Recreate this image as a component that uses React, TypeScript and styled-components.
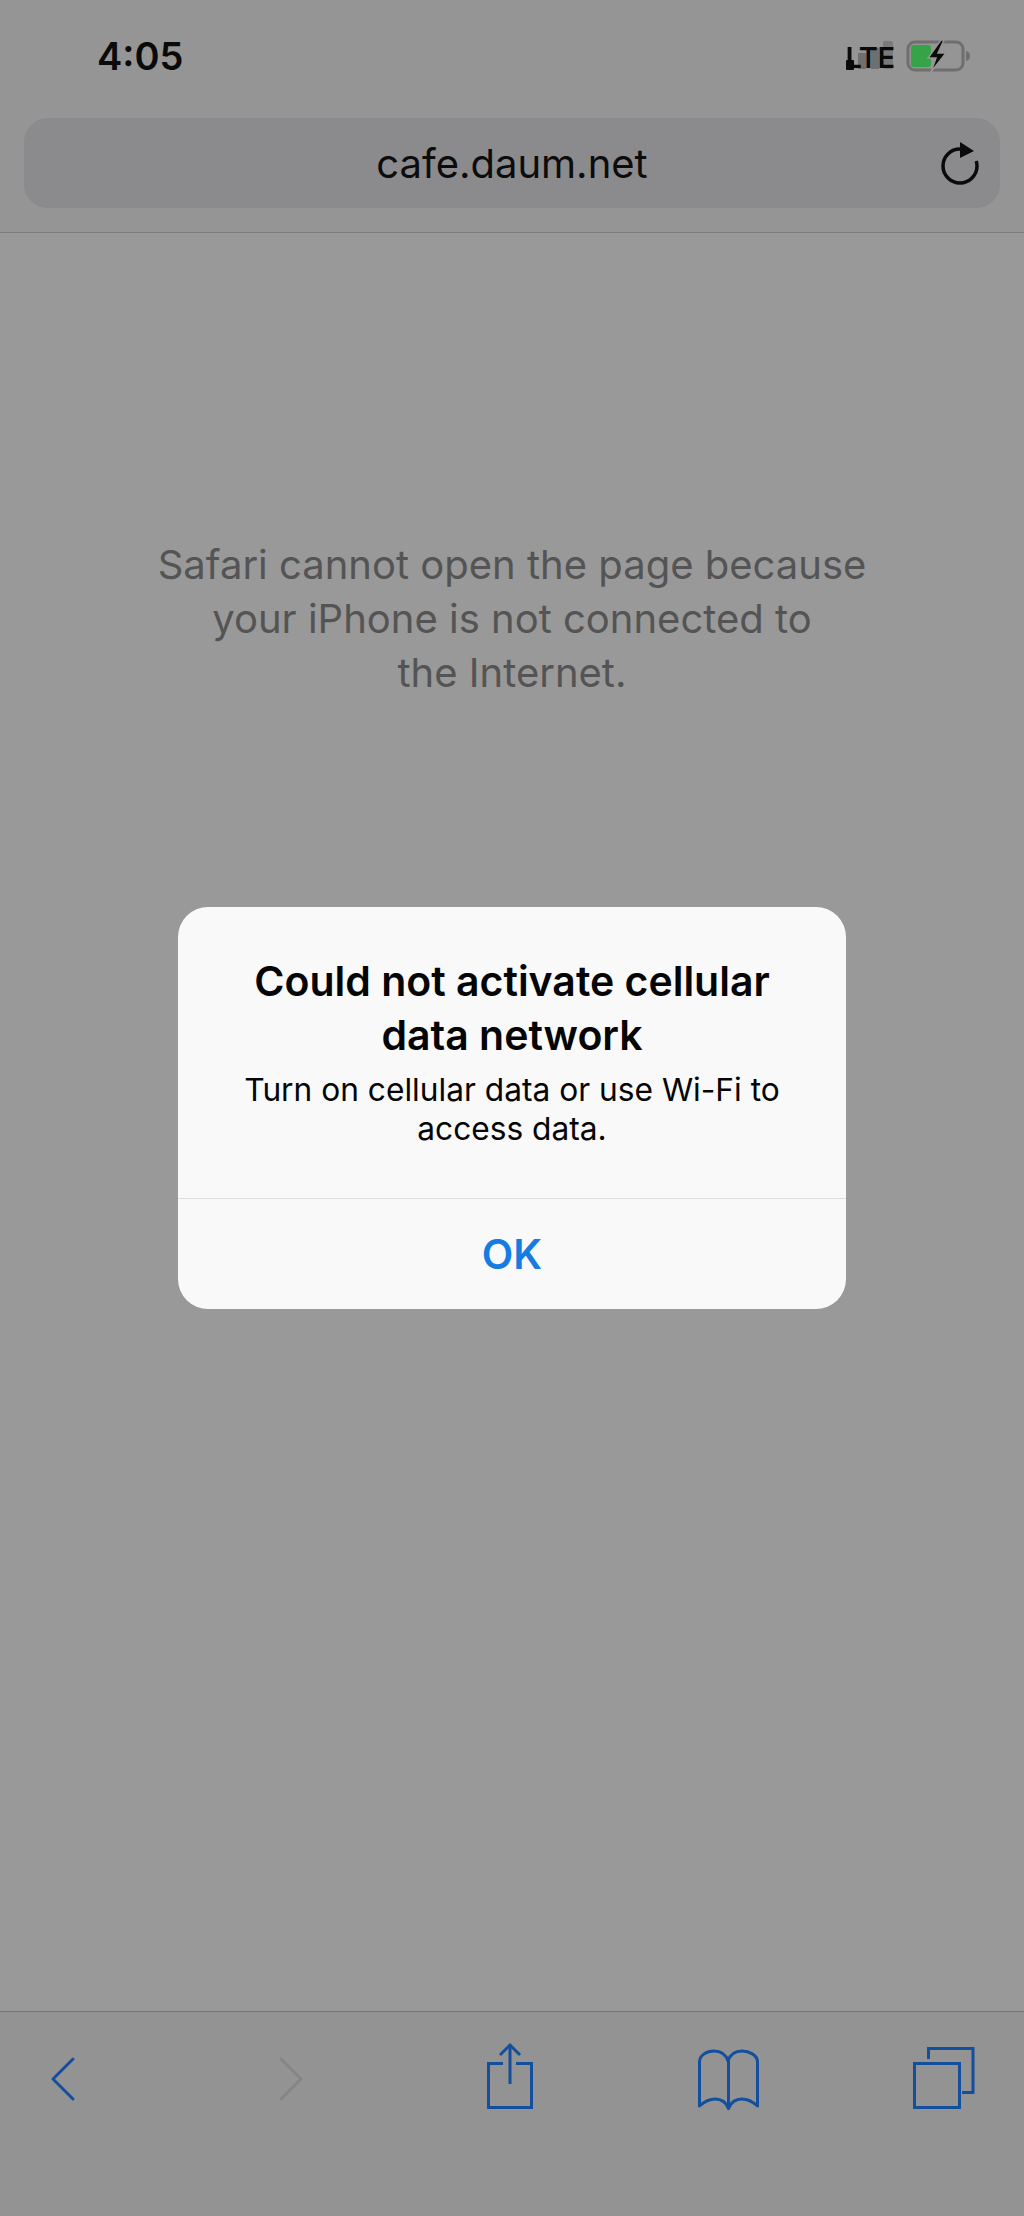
import React from "react";
import styled, { createGlobalStyle } from "styled-components";

const Global = createGlobalStyle`
  html, body { margin: 0; padding: 0; }
  body { font-family: Inter, "Noto Sans", "Liberation Sans", sans-serif; background: #999; }
`;

const Screen = styled.div`
  position: relative;
  width: 1024px;
  height: 2216px;
  display: flex;
  flex-direction: column;
  background: #999999;
  overflow: hidden;
`;

const Header = styled.header`
  height: 232px;
  flex: none;
  background: #959595;
  border-bottom: 1px solid #7c7c7c;
`;

const StatusBar = styled.div`
  height: 112px;
  margin-bottom: 6px;
  padding: 0 54px 0 97px;
  display: flex;
  align-items: center;
  justify-content: space-between;
`;

const Time = styled.span`
  font-size: 38px;
  font-weight: 600;
  color: #0a0a0a;
`;

const StatusRight = styled.div`
  display: flex;
  align-items: center;
  gap: 12px;
`;

const Carrier = styled.div`
  position: relative;
  width: 48px;
  height: 30px;
  display: flex;
  align-items: center;
  justify-content: center;
`;

const SignalBars = styled.svg`
  position: absolute;
  left: 0;
  top: 0;
`;

const CarrierLabel = styled.span`
  position: relative;
  font-size: 29px;
  font-weight: 600;
  letter-spacing: -0.5px;
  color: #0a0a0a;
  line-height: 30px;
  top: 2px;
`;

const AddressBar = styled.div`
  height: 90px;
  margin: 0 24px;
  padding-right: 20px;
  border-radius: 24px;
  background: #8b8b8d;
  display: grid;
  grid-template-columns: 1fr auto 1fr;
  align-items: center;
`;

const Url = styled.span`
  grid-column: 2;
  font-size: 40px;
  font-weight: 400;
  color: #0c0c0c;
  margin-left: 20px;
`;

const ReloadIcon = styled.svg`
  grid-column: 3;
  justify-self: end;
`;

const Content = styled.main`
  flex: 1;
  padding-top: 305px;
  display: flex;
  flex-direction: column;
  align-items: center;
`;

const Message = styled.p`
  margin: 0;
  font-size: 40px;
  line-height: 54px;
  font-weight: 400;
  color: #545454;
  text-align: center;
`;

const Alert = styled.div`
  position: absolute;
  left: 178px;
  top: 907px;
  width: 668px;
  height: 402px;
  border-radius: 30px;
  background: #f9f9f9;
  display: flex;
  flex-direction: column;
  overflow: hidden;
`;

const AlertBody = styled.div`
  height: 292px;
  padding-top: 47px;
  box-sizing: border-box;
  text-align: center;
  color: #050505;
  border-bottom: 1px solid #dedede;
`;

const AlertTitle = styled.h2`
  margin: 0 0 8px;
  font-size: 41px;
  line-height: 54px;
  font-weight: 600;
`;

const AlertText = styled.p`
  margin: 0;
  font-size: 31.7px;
  line-height: 39px;
  font-weight: 400;
`;

const AlertButton = styled.div`
  flex: 1;
  display: flex;
  align-items: center;
  justify-content: center;
  font-size: 41px;
  font-weight: 600;
  color: #157ce2;
`;

const Toolbar = styled.footer`
  height: 205px;
  flex: none;
  box-sizing: border-box;
  border-top: 1px solid #767676;
  background: #939393;
  padding: 25px 0 0 33px;
  display: grid;
  grid-template-columns: 228px 219px 218px 215px 60px;
  align-items: start;
`;

const ToolIcon = styled.svg<{ $muted?: boolean }>`
  display: block;
  overflow: visible;
  fill: none;
  stroke: ${(p) => (p.$muted ? "#858585" : "#134f9c")};
  stroke-width: 3;
`;

export default function App() {
  return (
    <Screen>
      <Global />
      <Header>
        <StatusBar>
          <Time>4:05</Time>
          <StatusRight>
            <Carrier>
              <SignalBars width="48" height="30" viewBox="0 0 48 30">
                <rect x="12" y="12" width="8" height="16" fill="#6f6f6f" />
                <rect x="25" y="7" width="8" height="21" fill="#6f6f6f" />
                <rect x="37" y="0" width="10" height="28" rx="2" fill="#7a7a7a" />
                <rect x="0" y="19" width="8" height="10" rx="1" fill="#0a0a0a" />
              </SignalBars>
              <CarrierLabel>LTE</CarrierLabel>
            </Carrier>
            <svg width="64" height="32" viewBox="0 0 64 32" fill="none">
              <rect x="2" y="2" width="55" height="28" rx="7" stroke="#6f6f6f" strokeWidth="3" />
              <rect x="5" y="5" width="20" height="22" rx="3" fill="#36a348" />
              <path d="M60 11q4 1 4 5t-4 5z" fill="#6f6f6f" />
              <path d="M35 0 L22 18 L30 18 L25 32 L40 13 L32 13 L38 0 Z" fill="#0a0a0a" stroke="#959595" strokeWidth="1.5" />
            </svg>
          </StatusRight>
        </StatusBar>
        <AddressBar>
          <Url>cafe.daum.net</Url>
          <ReloadIcon width="40" height="46" viewBox="0 0 40 46" fill="none">
            <path d="M20 9A17 17 0 1 0 37 26C37 24 36.7 22.5 36.2 21" stroke="#0a0a0a" strokeWidth="3.5" />
            <path d="M20 2L34 11L20 18Z" fill="#0a0a0a" />
          </ReloadIcon>
        </AddressBar>
      </Header>
      <Content>
        <Message>
          Safari cannot open the page because
          <br />
          your iPhone is not connected to
          <br />
          the Internet.
        </Message>
      </Content>
      <Alert>
        <AlertBody>
          <AlertTitle>
            Could not activate cellular
            <br />
            data network
          </AlertTitle>
          <AlertText>
            Turn on cellular data or use Wi-Fi to
            <br />
            access data.
          </AlertText>
        </AlertBody>
        <AlertButton>OK</AlertButton>
      </Alert>
      <Toolbar>
        <ToolIcon width="60" height="80" viewBox="0 0 60 80" strokeLinecap="round" strokeLinejoin="round">
          <path d="M40 22L20 42L40 62" />
        </ToolIcon>
        <ToolIcon $muted width="60" height="80" viewBox="0 0 60 80" strokeLinecap="round" strokeLinejoin="round">
          <path d="M20 22L40 42L20 62" />
        </ToolIcon>
        <ToolIcon width="60" height="80" viewBox="0 0 60 80">
          <path d="M23 26.5H8.5V70.5H51.5V26.5H36" />
          <path d="M30 8V47" />
          <path d="M20 18L30 8L40 18" />
        </ToolIcon>
        <ToolIcon width="60" height="80" viewBox="0 0 60 80" strokeLinejoin="round" strokeLinecap="round">
          <path d="M1.5 69V25C1.5 18 9 14 16 14C23 14 28 18 30 24C32 18 37 14 44 14C51 14 59.5 18 59.5 25V69C55 65 50 62 44 62C38 62 33 65 30.5 71.5C28 65 23 62 17 62C11 62 6 65 1.5 69Z" />
          <path d="M30.5 24V71" />
        </ToolIcon>
        <ToolIcon width="60" height="80" viewBox="0 0 60 80">
          <path d="M15.5 22V11.5H60V55.5H49" />
          <rect x="1.5" y="26.5" width="45" height="44" />
        </ToolIcon>
      </Toolbar>
    </Screen>
  );
}
